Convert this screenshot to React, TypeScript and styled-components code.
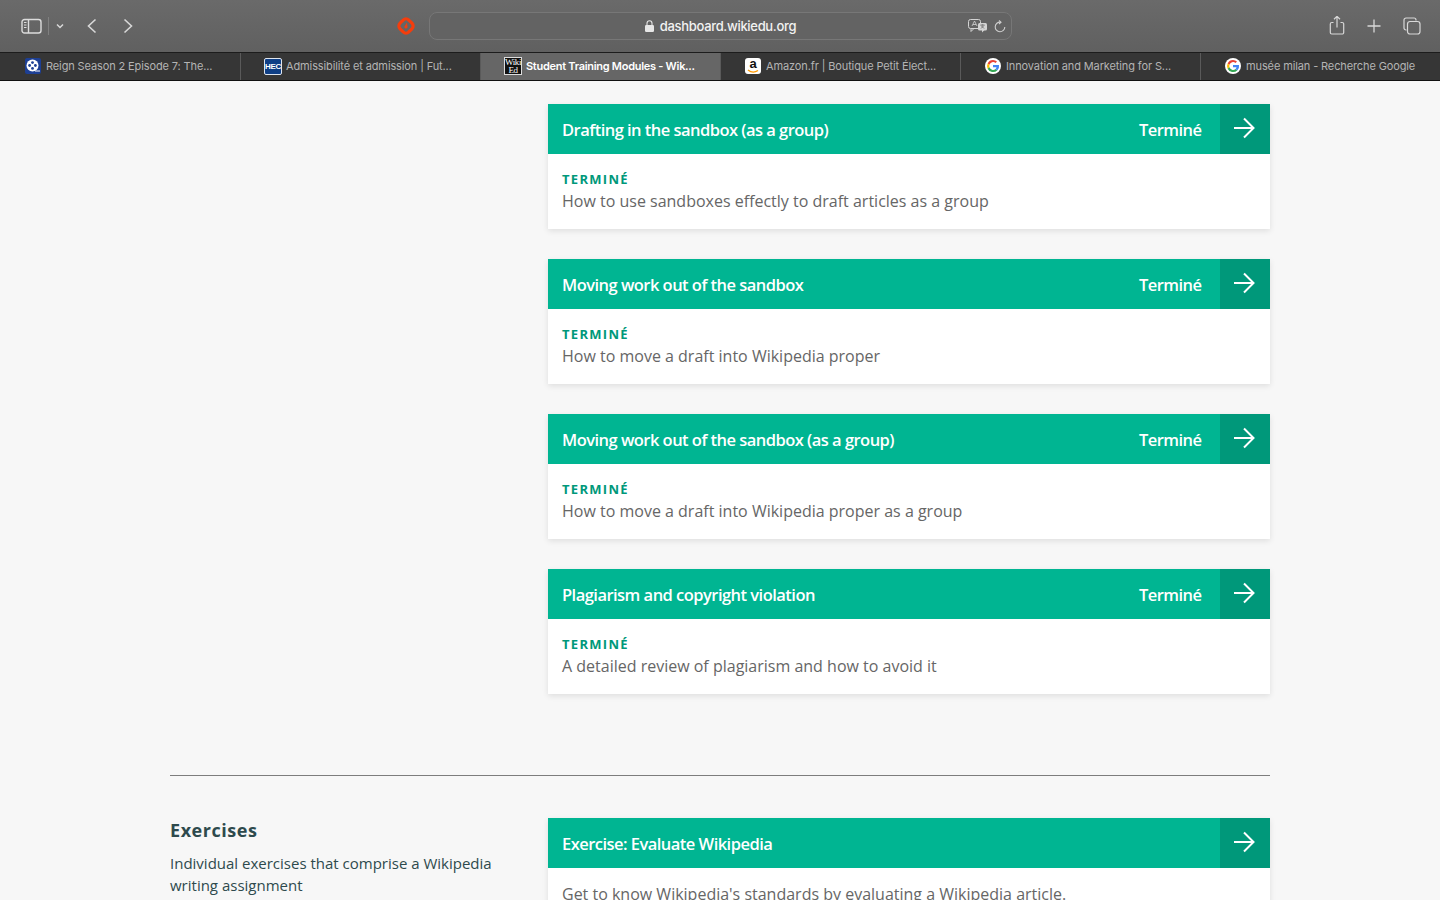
import styled, { createGlobalStyle } from "styled-components";

const GlobalStyle = createGlobalStyle`
  html, body {
    margin: 0;
    padding: 0;
    height: 900px;
    overflow: hidden;
    background: #f7f7f7;
  }
  * { box-sizing: border-box; }
`;

const Window = styled.div`
  width: 1440px;
  height: 900px;
  overflow: hidden;
  display: flex;
  flex-direction: column;
`;

const Toolbar = styled.div`
  height: 52px;
  flex: none;
  display: flex;
  align-items: center;
  padding-left: 20px;
  background: linear-gradient(#6a6a6a, #606060);
`;

const ToolGroup = styled.div`
  width: 376px;
  display: flex;
  align-items: center;
`;

const IconSlot = styled.div<{ $width: number }>`
  width: ${(p) => p.$width}px;
  display: flex;
  justify-content: center;
  align-items: center;
`;

const ToolDivider = styled.div`
  width: 1px;
  height: 18px;
  margin: 0 5px 0 6px;
  background: #808080;
`;

const NavButtons = styled.div`
  display: flex;
  gap: 24px;
  margin-left: 20px;
  align-items: center;
`;

const ExtensionSlot = styled.div`
  width: 33px;
  display: flex;
  align-items: center;
`;

const AddressBar = styled.div`
  width: 583px;
  height: 28px;
  position: relative;
  display: flex;
  align-items: center;
  justify-content: center;
  border: 1px solid #777;
  border-radius: 8px;
  background: #636363;
`;

const AddressText = styled.div`
  display: flex;
  align-items: center;
  gap: 6px;
  font: 500 13px "Inter", "Liberation Sans", sans-serif;
  letter-spacing: -0.32px;
  color: #f2f2f2;
`;

const AddressActions = styled.div`
  position: absolute;
  right: 5px;
  top: 6px;
  display: flex;
  align-items: center;
  gap: 6px;
`;

const ToolActions = styled.div`
  display: flex;
  align-items: center;
  gap: 22px;
  margin-left: 317px;
`;

const TabStrip = styled.div`
  height: 29px;
  flex: none;
  display: grid;
  grid-template-columns: repeat(6, 240px);
  background: #363636;
  border-top: 1px solid #1c1c1c;
  border-bottom: 1px solid #111;
`;

const Tab = styled.div<{ $active?: boolean }>`
  display: flex;
  align-items: center;
  gap: 4px;
  padding: 0 0 1px 23px;
  background: ${(p) => (p.$active ? "#666" : "transparent")};
  border-left: 1px solid #5a5a5a;

  &:first-child {
    border-left-color: transparent;
  }
`;

const FaviconSlot = styled.div`
  width: 18px;
  height: 18px;
  flex: none;
  display: flex;
  align-items: center;
  justify-content: center;
`;

const TabLabel = styled.span<{ $active?: boolean }>`
  font: ${(p) => (p.$active ? 600 : 400)} 11px "Inter", "Liberation Sans", sans-serif;
  letter-spacing: ${(p) => (p.$active ? "-0.28px" : "-0.12px")};
  color: ${(p) => (p.$active ? "#fff" : "#b4b4b4")};
  white-space: nowrap;
`;

const HecIcon = styled.div`
  width: 18px;
  height: 17px;
  background: #0f3f86;
  border: 1px solid #dfe5ee;
  border-radius: 2px;
  display: flex;
  align-items: center;
  justify-content: center;
  font: 700 8px "Liberation Sans", sans-serif;
  letter-spacing: -0.3px;
  color: #fff;
`;

const WikiIcon = styled.div`
  width: 18px;
  height: 18px;
  overflow: hidden;
  background: #111;
  border: 1px solid #ddd;
  display: flex;
  flex-direction: column;
  align-items: center;
  font: 400 9px/8px "Liberation Serif", serif;
  letter-spacing: -0.4px;
  color: #fff;
`;

const AmazonIcon = styled.div`
  width: 16px;
  height: 16px;
  background: #fff;
  border-radius: 3px;
  position: relative;
  display: flex;
  justify-content: center;
  font: 700 13px/12px "Liberation Sans", sans-serif;
  color: #111;

  svg {
    position: absolute;
    left: 2px;
    bottom: 0;
  }
`;

const Page = styled.div`
  flex: 1;
  min-height: 0;
  overflow: hidden;
  background: #f7f7f7;
`;

const Container = styled.div`
  width: 1100px;
  margin-left: 170px;
  padding-top: 23px;
`;

const ModuleRow = styled.div`
  display: grid;
  grid-template-columns: 378px 722px;
`;

const ModuleList = styled.div`
  display: flex;
  flex-direction: column;
  gap: 30px;
`;

const Card = styled.div`
  background: #fff;
  box-shadow: 0 2px 6px rgba(0, 0, 0, 0.1);
`;

const CardHead = styled.div`
  height: 50px;
  display: flex;
  align-items: center;
  padding-left: 14px;
  background: #00b592;
  color: #fff;
`;

const CardTitle = styled.div`
  flex: 1;
  font: 600 16.5px "Open Sans", sans-serif;
  letter-spacing: -0.53px;
`;

const Status = styled.div`
  width: 81px;
  font: 600 16.5px "Open Sans", sans-serif;
  letter-spacing: -0.55px;
`;

const ArrowBox = styled.div`
  width: 50px;
  height: 50px;
  display: flex;
  align-items: center;
  justify-content: center;
  padding: 0 2px 2px 0;
  background: #00987a;
`;

const CardBody = styled.div<{ $plain?: boolean }>`
  padding: ${(p) => (p.$plain ? "13px" : "17px")} 14px 17px;
  height: ${(p) => (p.$plain ? "auto" : "75px")};
`;

const Eyebrow = styled.div`
  font: 700 13px/17px "Open Sans", sans-serif;
  letter-spacing: 1.3px;
  color: #00987a;
`;

const CardText = styled.div`
  font: 400 16px/26px "Open Sans", sans-serif;
  color: #666;
`;

const Rule = styled.div`
  height: 1px;
  margin-top: 81px;
  background: #7d7d7d;
`;

const SectionRow = styled.div`
  display: grid;
  grid-template-columns: 378px 722px;
  padding-top: 42px;
`;

const SectionIntro = styled.div`
  padding-right: 40px;
`;

const SectionTitle = styled.div`
  font: 700 18px/24px "Open Sans", sans-serif;
  letter-spacing: 0.55px;
  color: #2e4a4d;
`;

const SectionText = styled.div`
  margin-top: 10px;
  font: 400 15px/22px "Open Sans", sans-serif;
  color: #2e4a4d;
`;

const modules = [
  { title: "Drafting in the sandbox (as a group)", text: "How to use sandboxes effectly to draft articles as a group" },
  { title: "Moving work out of the sandbox", text: "How to move a draft into Wikipedia proper" },
  { title: "Moving work out of the sandbox (as a group)", text: "How to move a draft into Wikipedia proper as a group" },
  { title: "Plagiarism and copyright violation", text: "A detailed review of plagiarism and how to avoid it" },
];

const Arrow = () => (
  <svg width="22" height="22" viewBox="0 0 22 22" fill="none" stroke="#fff" strokeWidth="2">
    <path d="M1 11h19M11 1.5l9.5 9.5-9.5 9.5" />
  </svg>
);

const GoogleIcon = () => (
  <svg width="16" height="16" viewBox="0 0 16 16">
    <circle cx="8" cy="8" r="8" fill="#fff" />
    <g transform="translate(8 8) scale(1.25) translate(-8 -8)">
      <path d="M8 3.2a4.8 4.8 0 0 1 3.2 1.2L10 5.6A3 3 0 0 0 5.2 7L3.7 5.9A4.8 4.8 0 0 1 8 3.2z" fill="#ea4335" />
      <path d="M3.7 5.9 5.2 7a3 3 0 0 0 0 2l-1.5 1.1a4.8 4.8 0 0 1 0-4.2z" fill="#fbbc05" />
      <path d="M3.7 10.1 5.2 9A3 3 0 0 0 10 10.4l1.4 1.1A4.8 4.8 0 0 1 3.7 10.1z" fill="#34a853" />
      <path d="M12.8 7.1H8V9h2.8a2.4 2.4 0 0 1-.8 1.4l1.4 1.1a4.8 4.8 0 0 0 1.4-4.4z" fill="#4285f4" />
    </g>
  </svg>
);

const tabs = [
  {
    label: "Reign Season 2 Episode 7: The...",
    icon: (
      <svg width="16" height="16" viewBox="0 0 16 16">
        <rect width="16" height="16" rx="2" fill="#1d3f94" />
        <circle cx="7.5" cy="7.5" r="6" fill="#fff" />
        <circle cx="7.5" cy="4.6" r="1.4" fill="#1d3f94" />
        <circle cx="7.5" cy="10.4" r="1.4" fill="#1d3f94" />
        <circle cx="4.6" cy="7.5" r="1.4" fill="#1d3f94" />
        <circle cx="10.4" cy="7.5" r="1.4" fill="#1d3f94" />
        <path d="M10 13h5" stroke="#fff" strokeWidth="1" />
      </svg>
    ),
  },
  {
    label: "Admissibilité et admission | Fut...",
    icon: (
      <HecIcon>
        <span>HEC</span>
      </HecIcon>
    ),
  },
  {
    label: "Student Training Modules - Wik...",
    active: true,
    icon: (
      <WikiIcon>
        <span>Wiki</span>
        <span>Ed</span>
      </WikiIcon>
    ),
  },
  {
    label: "Amazon.fr | Boutique Petit Élect...",
    icon: (
      <AmazonIcon>
        a
        <svg width="12" height="5" viewBox="0 0 12 5" fill="none" stroke="#f90" strokeWidth="1.4">
          <path d="M1 1c3 2.5 7 2.5 10 .5" />
        </svg>
      </AmazonIcon>
    ),
  },
  { label: "Innovation and Marketing for S...", icon: <GoogleIcon /> },
  { label: "musée milan - Recherche Google", icon: <GoogleIcon /> },
];

export default function App() {
  return (
    <>
      <GlobalStyle />
      <Window>
        <Toolbar>
          <ToolGroup>
            <IconSlot $width={22}>
              <svg width="21" height="16" viewBox="0 0 21 16" fill="none" stroke="#dcdcdc" strokeWidth="1.4">
                <rect x="1" y="1.5" width="19" height="13.5" rx="2.5" />
                <path d="M7.5 1.5V15" />
                <path d="M3 4.5h2.5M3 7h2.5M3 9.5h2.5" strokeWidth="1" />
              </svg>
            </IconSlot>
            <ToolDivider />
            <IconSlot $width={12}>
              <svg width="8" height="6" viewBox="0 0 8 6" fill="none" stroke="#d8d8d8" strokeWidth="1.5">
                <path d="M1 1.5l3 3 3-3" />
              </svg>
            </IconSlot>
            <NavButtons>
              <svg width="12" height="16" viewBox="0 0 12 16" fill="none" stroke="#d8d8d8" strokeWidth="1.6">
                <path d="M9.5 1.5 2.5 8l7 6.5" />
              </svg>
              <svg width="12" height="16" viewBox="0 0 12 16" fill="none" stroke="#d8d8d8" strokeWidth="1.6">
                <path d="M2.5 1.5 9.5 8l-7 6.5" />
              </svg>
            </NavButtons>
          </ToolGroup>
          <ExtensionSlot>
            <svg width="20" height="20" viewBox="0 0 20 20" fill="none">
              <rect x="3.8" y="3.8" width="12.4" height="12.4" rx="4" transform="rotate(45 10 10)" stroke="#f53d0c" strokeWidth="3.2" />
              <path d="M11 6.5 8.6 10.2a1.6 1.6 0 1 0 2.8 0z" fill="#f53d0c" />
            </svg>
          </ExtensionSlot>
          <AddressBar>
            <AddressText>
              <svg width="9" height="12" viewBox="0 0 9 12">
                <rect x="0" y="5" width="9" height="7" rx="1.2" fill="#e6e6e6" />
                <path d="M2 5.5V3.2a2.5 2.5 0 0 1 5 0v2.3" fill="none" stroke="#e6e6e6" strokeWidth="1.1" />
              </svg>
              dashboard.wikiedu.org
            </AddressText>
            <AddressActions>
              <svg width="20" height="14" viewBox="0 0 20 14">
                <rect x="0.5" y="0.5" width="12" height="9" rx="2" fill="none" stroke="#d4d4d4" />
                <path d="M3 9.5v3l3-3" fill="none" stroke="#d4d4d4" />
                <path d="M4 7l2.500-5L9 7M5 5.500h3" fill="none" stroke="#d4d4d4" strokeWidth="0.8" />
                <rect x="10" y="4" width="9" height="7.5" rx="1.5" fill="#d4d4d4" />
                <path d="M14 11v2.5l2.5-2.5" fill="#d4d4d4" />
                <path d="M12.500 6h4M14.500 5.500v1M13 9.500l3-3M13 6.500l3 3" stroke="#636363" strokeWidth="0.8" />
              </svg>
              <svg width="12" height="13" viewBox="0 0 12 13" fill="none" stroke="#cfcfcf" strokeWidth="1.1">
                <path d="M6.5 2.2A4.8 4.8 0 1 0 10.8 7" />
                <path d="M5 .5l2 1.7-2 1.8" />
              </svg>
            </AddressActions>
          </AddressBar>
          <ToolActions>
            <svg width="16" height="20" viewBox="0 1 16 20" fill="none" stroke="#d8d8d8" strokeWidth="1.2">
              <path d="M4.5 7.5H2.8A1.5 1.5 0 0 0 1.3 9v8.5A1.5 1.5 0 0 0 2.8 19h10.4a1.5 1.5 0 0 0 1.5-1.5V9a1.5 1.5 0 0 0-1.5-1.500h-1.700" />
              <path d="M8 12.5V1.5M5 4.2l3-2.9 3 2.900" />
            </svg>
            <svg width="14" height="14" viewBox="0 0 14 14" fill="none" stroke="#d8d8d8" strokeWidth="1.3">
              <path d="M7 .5v13M.5 7h13" />
            </svg>
            <svg width="18" height="18" viewBox="0 0 18 18" fill="none" stroke="#d8d8d8" strokeWidth="1.2">
              <path d="M3.5 13H3a2 2 0 0 1-2-2V3a2 2 0 0 1 2-2h8a2 2 0 0 1 2 2v.5" />
              <rect x="4.5" y="4.5" width="12.5" height="12.5" rx="2.5" />
            </svg>
          </ToolActions>
        </Toolbar>

        <TabStrip>
          {tabs.map((tab) => (
            <Tab key={tab.label} $active={tab.active}>
              <FaviconSlot>{tab.icon}</FaviconSlot>
              <TabLabel $active={tab.active}>{tab.label}</TabLabel>
            </Tab>
          ))}
        </TabStrip>

        <Page>
          <Container>
            <ModuleRow>
              <div />
              <ModuleList>
                {modules.map((m) => (
                  <Card key={m.title}>
                    <CardHead>
                      <CardTitle>{m.title}</CardTitle>
                      <Status>Terminé</Status>
                      <ArrowBox>
                        <Arrow />
                      </ArrowBox>
                    </CardHead>
                    <CardBody>
                      <Eyebrow>TERMINÉ</Eyebrow>
                      <CardText>{m.text}</CardText>
                    </CardBody>
                  </Card>
                ))}
              </ModuleList>
            </ModuleRow>

            <Rule />

            <SectionRow>
              <SectionIntro>
                <SectionTitle>Exercises</SectionTitle>
                <SectionText>Individual exercises that comprise a Wikipedia writing assignment</SectionText>
              </SectionIntro>
              <Card>
                <CardHead>
                  <CardTitle>Exercise: Evaluate Wikipedia</CardTitle>
                  <ArrowBox>
                    <Arrow />
                  </ArrowBox>
                </CardHead>
                <CardBody $plain>
                  <CardText>Get to know Wikipedia's standards by evaluating a Wikipedia article.</CardText>
                </CardBody>
              </Card>
            </SectionRow>
          </Container>
        </Page>
      </Window>
    </>
  );
}
